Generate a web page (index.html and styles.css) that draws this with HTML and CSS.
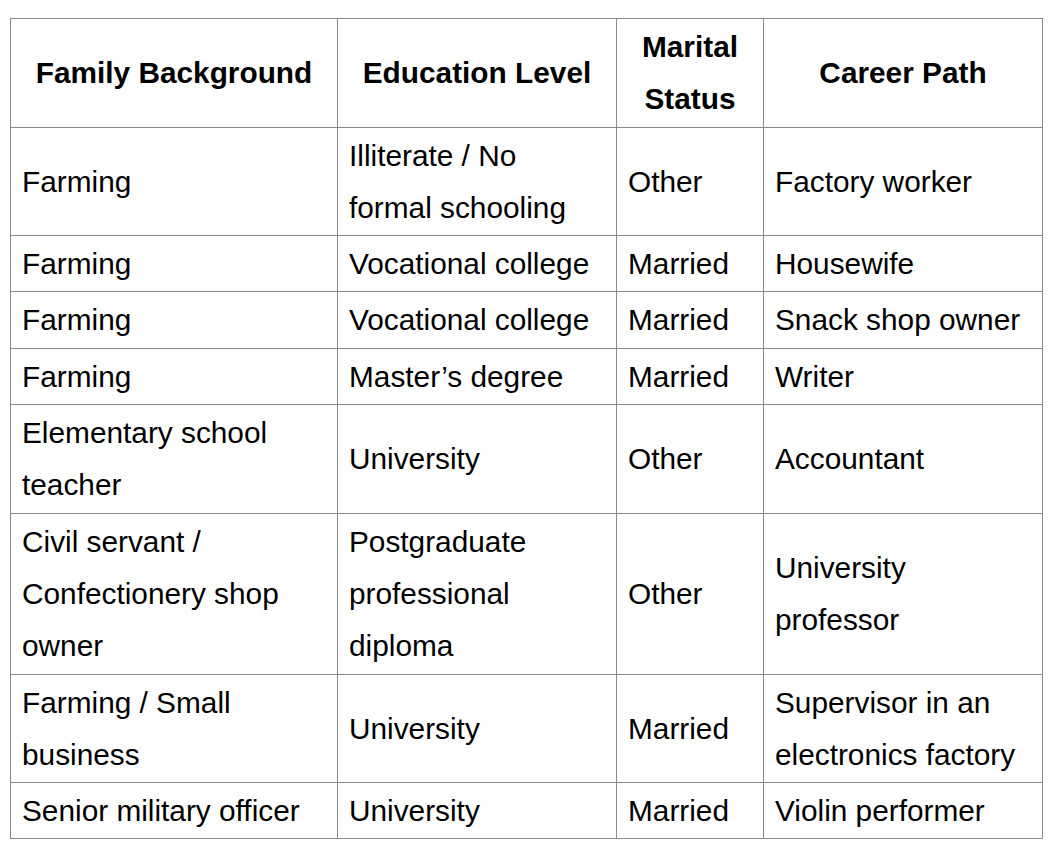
FILE: index.html
```html
<!DOCTYPE html>
<html>
<head>
<meta charset="utf-8">
<link rel="stylesheet" href="styles.css">
</head>
<body>
<table class="data">
  <colgroup>
    <col class="c1"><col class="c2"><col class="c3"><col class="c4">
  </colgroup>
  <thead>
    <tr><th>Family Background</th><th>Education Level</th><th>Marital Status</th><th>Career Path</th></tr>
  </thead>
  <tbody>
    <tr><td>Farming</td><td>Illiterate / No formal schooling</td><td>Other</td><td>Factory worker</td></tr>
    <tr><td>Farming</td><td>Vocational college</td><td>Married</td><td>Housewife</td></tr>
    <tr><td>Farming</td><td>Vocational college</td><td>Married</td><td>Snack shop owner</td></tr>
    <tr><td>Farming</td><td>Master’s degree</td><td>Married</td><td>Writer</td></tr>
    <tr><td>Elementary school teacher</td><td>University</td><td>Other</td><td>Accountant</td></tr>
    <tr><td>Civil servant / Confectionery shop owner</td><td>Postgraduate professional diploma</td><td>Other</td><td>University professor</td></tr>
    <tr><td>Farming / Small business</td><td>University</td><td>Married</td><td>Supervisor in an electronics factory</td></tr>
    <tr><td>Senior military officer</td><td>University</td><td>Married</td><td>Violin performer</td></tr>
  </tbody>
</table>
</body>
</html>
```
FILE: styles.css
```css
html, body {
  margin: 0;
  padding: 0;
  background: #ffffff;
}
body {
  padding: 18px 10px;
  font-family: "Liberation Sans", Arial, sans-serif;
  color: #000;
}
.data {
  border-collapse: collapse;
  table-layout: fixed;
  width: 1032px;
  font-size: 29.8px;
  line-height: 52.3px;
}
.c1 { width: 327px; }
.c2 { width: 279px; }
.c3 { width: 147px; }
.c4 { width: 279px; }
.data th, .data td {
  border: 1px solid #8a8a8a;
  padding: 2px 11px 1px 11px;
  vertical-align: middle;
}
.data th {
  font-weight: bold;
  text-align: center;
}
.data td {
  text-align: left;
  font-weight: normal;
}
```
